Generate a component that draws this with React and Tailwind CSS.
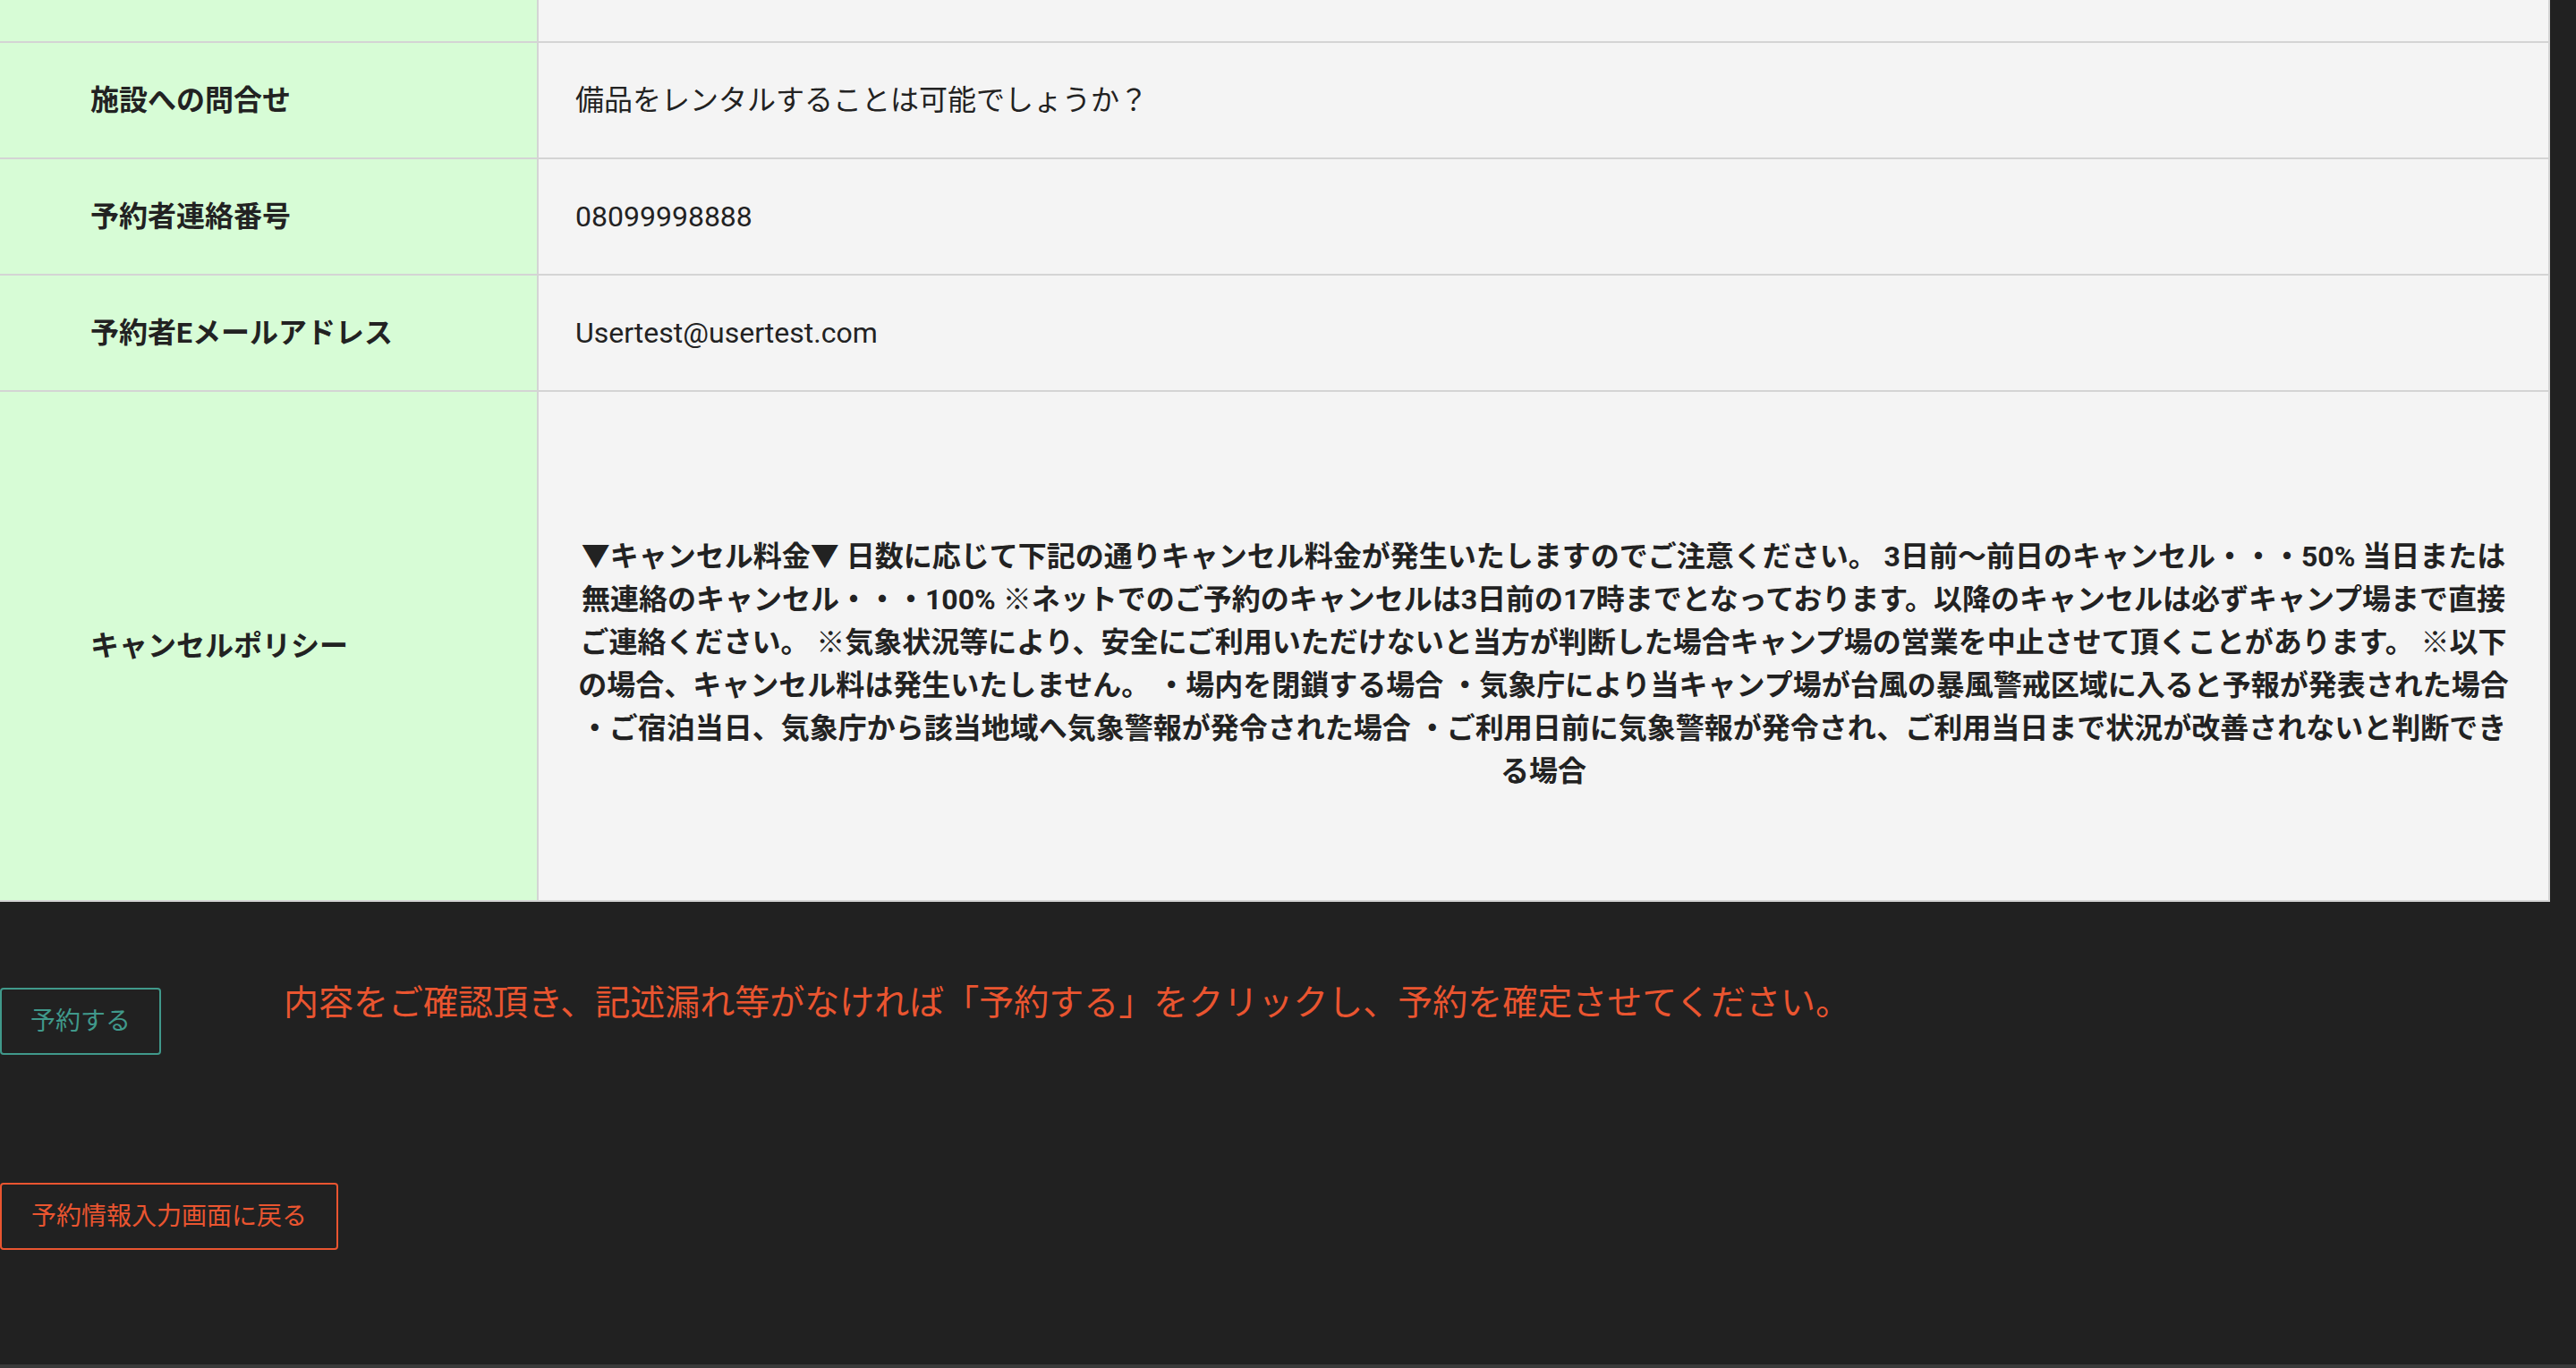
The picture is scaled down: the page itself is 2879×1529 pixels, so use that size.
const font = { fontFamily: 'Roboto, "Noto Sans CJK JP", sans-serif' };

const rows = [
  { label: "施設への問合せ", value: "備品をレンタルすることは可能でしょうか？" },
  { label: "予約者連絡番号", value: "08099998888" },
  { label: "予約者Eメールアドレス", value: "Usertest@usertest.com" },
];

const policy =
  "▼キャンセル料金▼ 日数に応じて下記の通りキャンセル料金が発生いたしますのでご注意ください。 3日前〜前日のキャンセル・・・50% 当日または無連絡のキャンセル・・・100% ※ネットでのご予約のキャンセルは3日前の17時までとなっております。以降のキャンセルは必ずキャンプ場まで直接ご連絡ください。 ※気象状況等により、安全にご利用いただけないと当方が判断した場合キャンプ場の営業を中止させて頂くことがあります。 ※以下の場合、キャンセル料は発生いたしません。 ・場内を閉鎖する場合 ・気象庁により当キャンプ場が台風の暴風警戒区域に入ると予報が発表された場合 ・ご宿泊当日、気象庁から該当地域へ気象警報が発令された場合 ・ご利用日前に気象警報が発令され、ご利用当日まで状況が改善されないと判断できる場合";

export default function App() {
  return (
    <div
      className="w-[2879px] h-[1529px] overflow-hidden bg-[#212121] flex flex-col"
      style={font}
    >
      {/* confirm table */}
      <div className="w-[2850px] border-r-2 border-[#d4d4d4] flex flex-col">
        <div className="flex h-[48px] border-b-2 border-[#d4d4d4]">
          <div className="w-[602px] bg-[#d7fcd6] border-r-2 border-[#d4d4d4]"></div>
          <div className="flex-1 bg-[#f4f4f4]"></div>
        </div>
        {rows.map((row) => (
          <div
            key={row.label}
            className="flex h-[130px] border-b-2 border-[#d4d4d4]"
          >
            <div className="w-[602px] bg-[#d7fcd6] border-r-2 border-[#d4d4d4] flex items-center pl-[101px] text-[32px] font-bold text-[#222]">
              {row.label}
            </div>
            <div className="flex-1 bg-[#f4f4f4] flex items-center pl-[41px] text-[32px] text-[#222]">
              {row.value}
            </div>
          </div>
        ))}
        <div className="flex h-[570px] border-b-2 border-[#d4d4d4]">
          <div className="w-[602px] bg-[#d7fcd6] border-r-2 border-[#d4d4d4] flex items-center pl-[101px] text-[32px] font-bold text-[#222]">
            キャンセルポリシー
          </div>
          <div className="flex-1 bg-[#f4f4f4] px-[40px] pt-[160px] text-center text-[32px] leading-[48px] font-bold text-[#222]">
            {policy}
          </div>
        </div>
      </div>

      {/* actions */}
      <div className="flex items-start mt-[96px]">
        <button className="h-[75px] px-[32px] border-2 border-[#40998b] rounded-[4px] text-[28px] text-[#40998b]">
          予約する
        </button>
        <p className="ml-[137px] text-[39px] leading-[38px] text-[#ea5530] mt-[-2px]">
          内容をご確認頂き、記述漏れ等がなければ「予約する」をクリックし、予約を確定させてください。
        </p>
      </div>
      <div className="mt-[143px]">
        <button className="h-[75px] px-[33px] border-2 border-[#ea5530] rounded-[4px] text-[28px] text-[#ea5530]">
          予約情報入力画面に戻る
        </button>
      </div>
      <div className="flex-1"></div>
      <div className="h-[4px] bg-[#3a3a3a]"></div>
    </div>
  );
}
